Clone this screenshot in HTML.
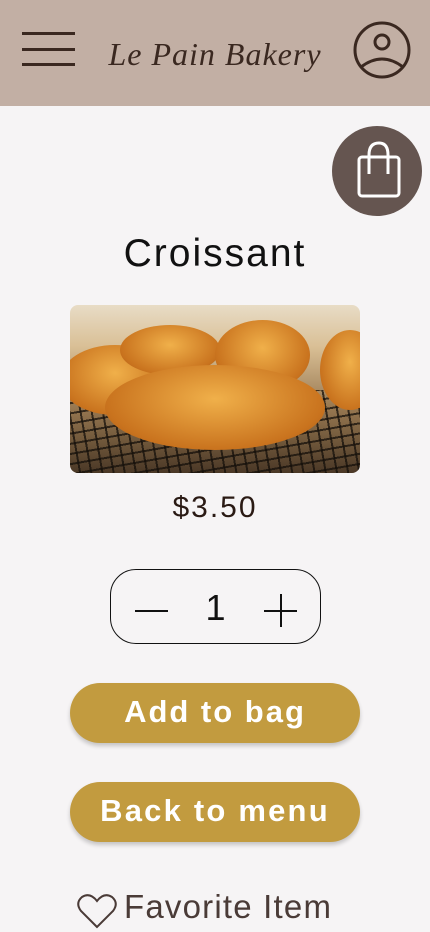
<!DOCTYPE html>
<html><head><meta charset="utf-8"><style>
*{margin:0;padding:0;box-sizing:border-box}
body{width:430px;height:932px;background:#f6f4f5;font-family:"Liberation Sans",sans-serif;position:relative;overflow:hidden}
.hdr{position:absolute;left:0;top:0;width:430px;height:106px;background:#c2afa4}
.bar{position:absolute;left:22px;width:53px;height:3px;background:#3a2820}
.logo{position:absolute;left:0;width:430px;top:36px;text-align:center;font-family:"Liberation Serif",serif;font-style:italic;font-size:32px;color:#3a2820;letter-spacing:1px}
.bag{position:absolute;left:332px;top:126px;width:90px;height:90px;border-radius:50%;background:#655550}
.t{position:absolute;left:0;width:430px;text-align:center}
.img{position:absolute;left:70px;top:305px;width:290px;height:168px;border-radius:8px;overflow:hidden;
background:linear-gradient(#e8dcc6 0%,#d9bf95 25%,#9a7a52 60%,#4a3826 100%)}
.grid{position:absolute;left:0;top:85px;width:290px;height:83px;background:repeating-linear-gradient(80deg,transparent 0 9px,rgba(20,15,10,.75) 9px 11px),repeating-linear-gradient(-10deg,transparent 0 8px,rgba(20,15,10,.75) 8px 10px)}
.cr{position:absolute;border-radius:50%;background:radial-gradient(ellipse at 50% 40%,#f0b04a,#c9731e 70%,#9a5214)}
.step{position:absolute;left:110px;top:569px;width:211px;height:75px;border:1px solid #111;border-radius:26px}
.btn{position:absolute;left:70px;width:290px;height:60px;border-radius:30px;background:#c29b3f;color:#fff;font-weight:bold;font-size:31px;text-align:center;line-height:58px;box-shadow:0 3px 4px rgba(0,0,0,.2)}
</style></head><body>
<div class="hdr">
<div class="bar" style="top:32px"></div><div class="bar" style="top:48px"></div><div class="bar" style="top:63px"></div>
<div class="logo">Le Pain Bakery</div>
<svg style="position:absolute;left:353px;top:21px" width="58" height="58" viewBox="0 0 58 58"><circle cx="29" cy="29" r="27" fill="none" stroke="#3a2820" stroke-width="3"/><circle cx="29" cy="21" r="7" fill="none" stroke="#3a2820" stroke-width="3"/><path d="M8 46 Q29 30 50 46" fill="none" stroke="#3a2820" stroke-width="3"/></svg>
</div>
<div class="bag"><svg style="position:absolute;left:22px;top:12px" width="48" height="60" viewBox="0 0 48 60"><rect x="5" y="19" width="40" height="39" rx="3" fill="none" stroke="#fff" stroke-width="3"/><path d="M15 36 V17 Q15 5 25 5 Q34 5 34 17 V36" fill="none" stroke="#fff" stroke-width="3"/></svg></div>
<div class="t" style="top:232px;font-size:39px;color:#111;letter-spacing:2px">Croissant</div>
<div class="img"><div class="grid"></div>
<div class="cr" style="left:-10px;top:40px;width:110px;height:70px"></div>
<div class="cr" style="left:50px;top:20px;width:100px;height:50px"></div>
<div class="cr" style="left:145px;top:15px;width:95px;height:70px"></div>
<div class="cr" style="left:250px;top:25px;width:60px;height:80px"></div>
<div class="cr" style="left:35px;top:60px;width:220px;height:85px"></div>
</div>
<div class="t" style="top:491px;font-size:30px;color:#2a1a14;letter-spacing:2px">$3.50</div>
<div class="step">
<div style="position:absolute;left:24px;top:40px;width:33px;height:2px;background:#111"></div>
<div style="position:absolute;left:0;width:209px;top:17px;text-align:center;font-size:36px;color:#111">1</div>
<div style="position:absolute;left:153px;top:40px;width:33px;height:2px;background:#111"></div>
<div style="position:absolute;left:169px;top:24px;width:2px;height:33px;background:#111"></div>
</div>
<div class="btn" style="top:683px;letter-spacing:2px">Add to bag</div>
<div class="btn" style="top:782px;letter-spacing:2.2px">Back to menu</div>
<svg style="position:absolute;left:77px;top:893px" width="40" height="36" viewBox="0 0 40 36"><path d="M20 34 L4 18 Q-2 10 5 4 Q13 -1 20 8 Q27 -1 35 4 Q42 10 36 18 Z" fill="none" stroke="#4a3b37" stroke-width="2"/></svg>
<div style="position:absolute;left:124px;top:888px;font-size:33px;color:#4a3b37;letter-spacing:1.2px">Favorite Item</div>
</body></html>
